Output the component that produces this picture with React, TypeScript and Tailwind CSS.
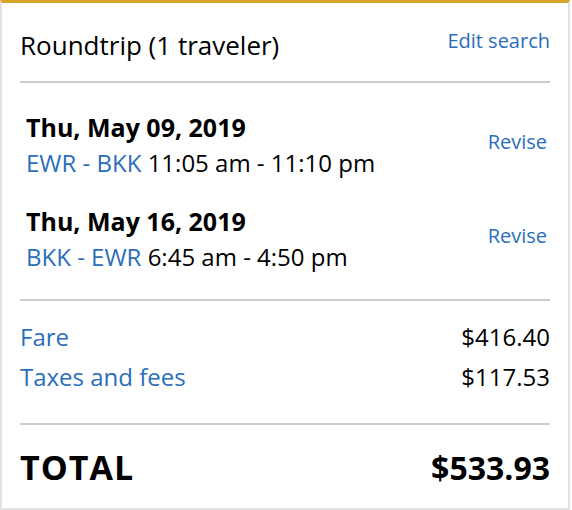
import React from "react";

type Leg = {
  date: string;
  route: string;
  times: string;
};

const legs: Leg[] = [
  { date: "Thu, May 09, 2019", route: "EWR - BKK", times: "11:05 am - 11:10 pm" },
  { date: "Thu, May 16, 2019", route: "BKK - EWR", times: "6:45 am - 4:50 pm" },
];

const charges = [
  { label: "Fare", amount: "$416.40" },
  { label: "Taxes and fees", amount: "$117.53" },
];

export default function App() {
  return (
    <main
      className="min-h-[510px] w-[572px] bg-white text-black"
      style={{ fontFamily: '"Open Sans", "Noto Sans", sans-serif' }}
    >
      <section className="h-[510px] w-[570px] border-x-2 border-b-2 border-t-[3px] border-x-[#e3e3e3] border-b-[#e3e3e3] border-t-[#d9a42b] px-[18px] pt-[26px]">
        <div className="flex items-start justify-between">
          <h1 className="text-[26px] leading-[32px]">Roundtrip (1 traveler)</h1>
          <a className="-mt-[2px] text-[20px] leading-[28px] text-[#2a6ebb]">Edit search</a>
        </div>

        <div className="mt-[20px] h-[2px] bg-[#cccccc]" />

        <div className="pt-[27px]">
          {legs.map((leg, i) => (
            <div key={leg.date} className={"flex items-start justify-between pl-[6px] pr-[3px] " + (i > 0 ? "mt-[22px]" : "")}>
              <div>
                <p className="text-[25px] font-bold leading-[34px]">{leg.date}</p>
                <p className="text-[24px] leading-[38px]">
                  <span className="text-[#2a6ebb]">{leg.route}</span> {leg.times}
                </p>
              </div>
              <a className="pt-[18px] text-[20px] leading-[28px] text-[#2a6ebb]">Revise</a>
            </div>
          ))}
        </div>

        <div className="mt-[23px] h-[2px] bg-[#cccccc]" />

        <div className="pt-[16px]">
          {charges.map((c) => (
            <div key={c.label} className="flex justify-between text-[24px] leading-[40px]">
              <span className="text-[#2a6ebb]">{c.label}</span>
              <span>{c.amount}</span>
            </div>
          ))}
        </div>

        <div className="mt-[26px] h-[2px] bg-[#cccccc]" />

        <div className="flex items-baseline justify-between pt-[20px] font-bold leading-[44px]">
          <span className="text-[34px] tracking-[1px]">TOTAL</span>
          <span className="text-[32px]">$533.93</span>
        </div>
      </section>
    </main>
  );
}
